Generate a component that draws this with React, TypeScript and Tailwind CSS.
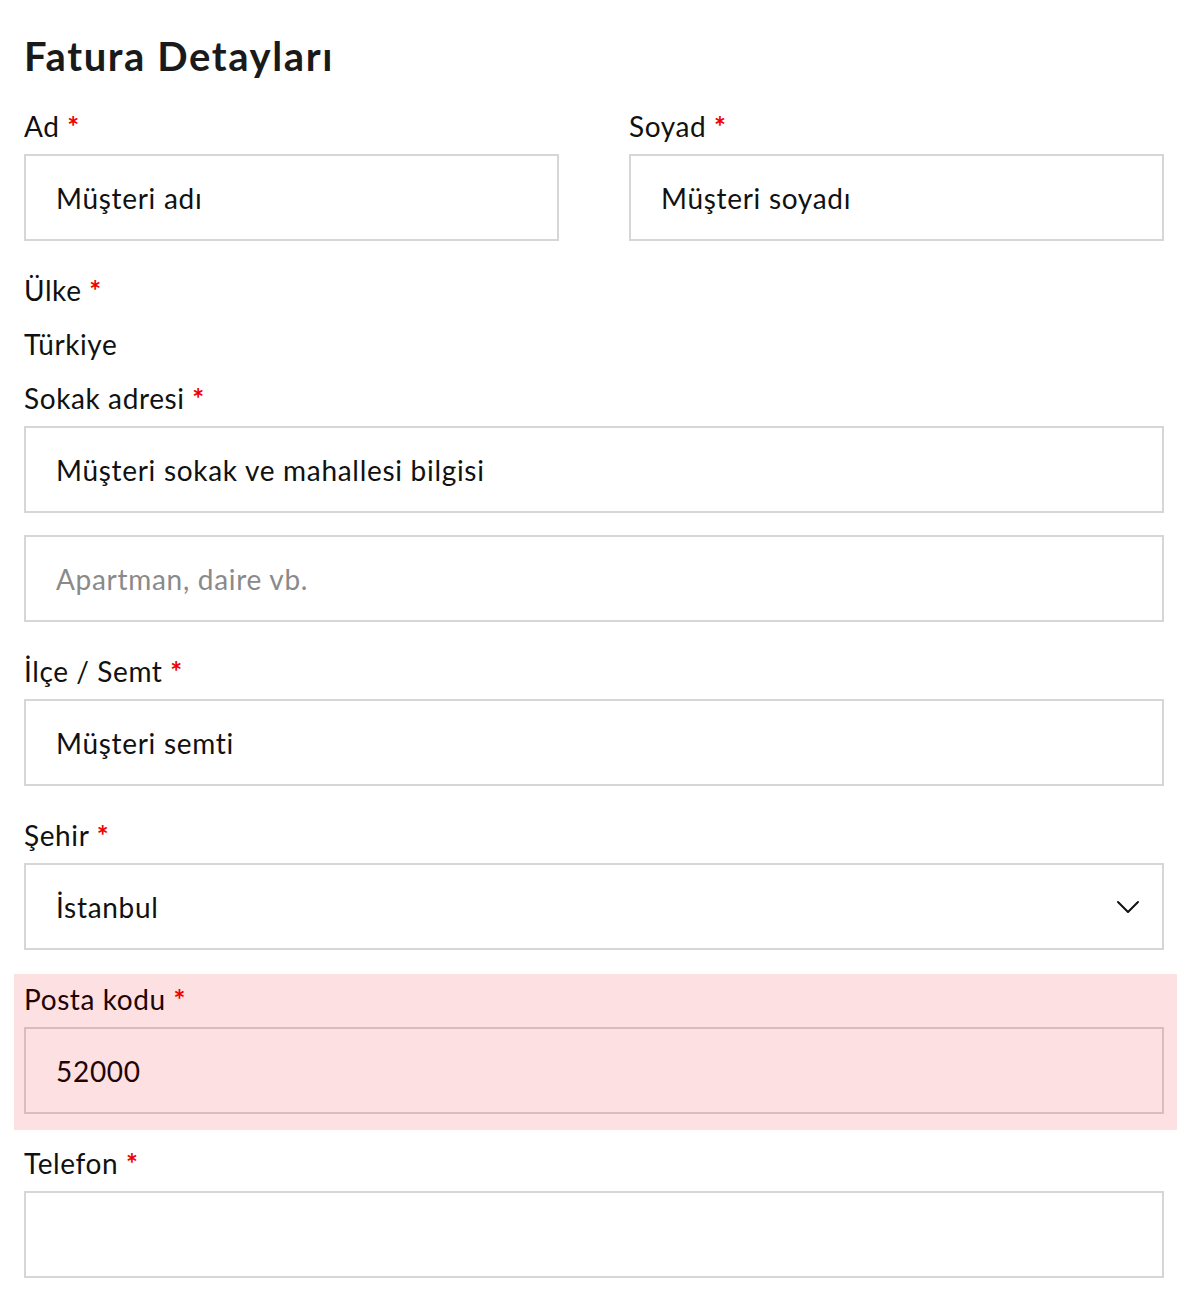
import React from "react";

const font = { fontFamily: "Lato, 'Noto Sans', sans-serif" };

const Label = ({ text }: { text: string }) => (
  <label className="block h-[40px] text-[28px] leading-[40px] tracking-[0.6px] text-[#111]">
    {text} <span className="font-bold text-[#ee0000]">*</span>
  </label>
);

const Input = ({ value, placeholder }: { value?: string; placeholder?: string }) => (
  <div className="mt-2 flex h-[87px] items-center border-2 border-[#d6d6d6] px-[30px] text-[28px] tracking-[0.7px]">
    {value ? (
      <span className="text-[#111]">{value}</span>
    ) : (
      <span className="text-[#8a8a8a]">{placeholder}</span>
    )}
  </div>
);

export default function App() {
  return (
    <div className="min-h-screen bg-white pl-6 pr-[28px] pt-8" style={font}>
      <h2 className="h-[48px] text-[40px] font-bold leading-[48px] tracking-[1.6px] text-[#1a1a1a]">
        Fatura Detayları
      </h2>

      <div className="mt-[26px] grid grid-cols-2 gap-x-[70px]">
        <div>
          <Label text="Ad" />
          <Input value="Müşteri adı" />
        </div>
        <div>
          <Label text="Soyad" />
          <Input value="Müşteri soyadı" />
        </div>
      </div>

      <div className="mt-[29px]">
        <Label text="Ülke" />
        <div className="mt-[14px] h-[40px] text-[28px] leading-[40px] tracking-[0.6px] text-[#111]">Türkiye</div>
      </div>

      <div className="mt-[14px]">
        <Label text="Sokak adresi" />
        <Input value="Müşteri sokak ve mahallesi bilgisi" />
        <div className="mt-[22px]">
          <Input placeholder="Apartman, daire vb." />
        </div>
      </div>

      <div className="mt-[29px]">
        <Label text="İlçe / Semt" />
        <Input value="Müşteri semti" />
      </div>

      <div className="mt-[29px]">
        <Label text="Şehir" />
        <div className="mt-2 flex h-[87px] items-center justify-between border-2 border-[#d6d6d6] pl-[30px] pr-[22px] text-[28px] tracking-[0.7px] text-[#111]">
          <span>İstanbul</span>
          <svg width="24" height="14" viewBox="0 0 24 14" fill="none">
            <path d="M2 2l10 10L22 2" stroke="#111" strokeWidth="2" strokeLinecap="round" strokeLinejoin="round" />
          </svg>
        </div>
      </div>

      <div className="-ml-[10px] -mr-[13px] mt-[24px] bg-[#fde0e1] pb-[16px] pl-[10px] pr-[13px] pt-[5px]">
        <label className="block h-[40px] text-[28px] leading-[40px] tracking-[0.6px] text-[#1f0505]">
          Posta kodu <span className="font-bold text-[#ee0000]">*</span>
        </label>
        <div className="mt-2 flex h-[87px] items-center border-2 border-[#d9bcbe] px-[30px] text-[28px] tracking-[0.7px] text-[#1f0505]">
          52000
        </div>
      </div>

      <div className="mt-[13px]">
        <Label text="Telefon" />
        <div className="mt-2 h-[87px] border-2 border-[#d6d6d6]" />
      </div>
    </div>
  );
}
